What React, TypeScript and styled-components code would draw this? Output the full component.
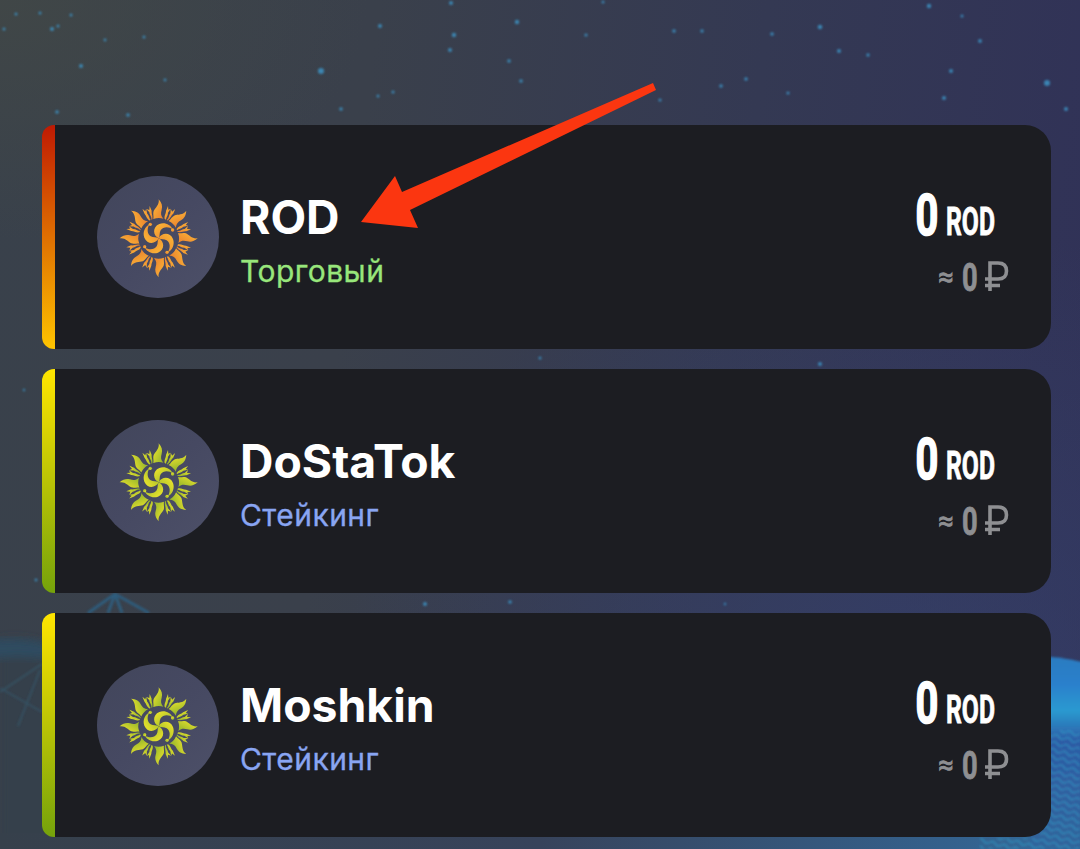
import React from "react";
import styled, { createGlobalStyle } from "styled-components";

const GlobalStyle = createGlobalStyle`
  * { box-sizing: border-box; }
  body { margin: 0; font-family: Inter, "Liberation Sans", sans-serif; background: #363d4b; }
`;

const Page = styled.main`
  position: relative;
  width: 1080px;
  height: 849px;
  overflow: hidden;
  padding: 125px 29px 0 42px;
  background:
    radial-gradient(ellipse 460px 300px at 0 0, rgba(66, 72, 70, 0.8), rgba(66, 72, 70, 0) 80%),
    radial-gradient(ellipse 560px 480px at 900px 700px, rgba(54, 66, 108, 0.7), rgba(54, 66, 108, 0)),
    linear-gradient(97deg, #39414b 0%, #3a404b 32%, #343953 65%, #303158 100%);
`;

const Backdrop = styled.svg`
  position: absolute;
  inset: 0;
`;

const WalletList = styled.div`
  position: relative;
  display: flex;
  flex-direction: column;
  gap: 20px;
`;

const WalletCard = styled.article<{ $from: string; $to: string }>`
  display: flex;
  align-items: center;
  height: 224px;
  padding: 0 42px 0 55px;
  overflow: hidden;
  border-radius: 12px 26px 26px 12px;
  background:
    linear-gradient(180deg, ${(p) => p.$from}, ${(p) => p.$to}) left / 13px 100% no-repeat,
    #1c1d22;
`;

const Avatar = styled.div`
  width: 122px;
  height: 122px;
  border-radius: 50%;
  background: linear-gradient(135deg, #42465b, #464962 50%, #4d5068);
`;

const Names = styled.div`
  flex: 1;
  margin-left: 21px;
  padding-top: 6px;
`;

const WalletName = styled.h2`
  margin: 0;
  color: #fff;
  font-size: 46.3px;
  line-height: 56px;
  font-weight: 700;
`;

const WalletKind = styled.p<{ $color: string }>`
  margin: 7px 0 1px;
  color: ${(p) => p.$color};
  font-size: 30px;
  line-height: 38px;
  letter-spacing: 0.45px;
  -webkit-text-stroke: 0.3px ${(p) => p.$color};
`;

const Figures = styled.svg`
  width: 110px;
  height: 120px;
  overflow: visible;
  font-family: Roboto, "Liberation Sans", sans-serif;
`;

const Pointer = styled.svg`
  position: absolute;
  left: 0;
  top: 0;
`;

type Palette = { id: string; light: string; dark: string };

const STEPS = [0, 45, 90, 135, 180, 225, 270, 315];

const Sun = ({ id, light, dark }: Palette) => (
  <svg width="122" height="122" viewBox="-185 -187 366 366">
    <defs>
      <linearGradient id={id} x1="0" y1="0" x2="1" y2="1">
        <stop offset="0.2" stopColor={light} />
        <stop offset="1" stopColor={dark} />
      </linearGradient>
    </defs>
    <g fill={`url(#${id})`}>
      {STEPS.map((angle) => (
        <g key={angle} transform={`rotate(${angle})`}>
          <path d="M0-117C10-106 12-96 9-86C6-76 6-68 14-59Q0-64-16-58C-14-66-18-74-15-82C-10-92 3-101 0-117Z" />
          <path d="M-22-56C-20-65-28-70-28-78L-37-88L-28-85L-27-97L-21-83C-22-73-17-69-19-57Z" />
          <path d="M18-58C16-68 22-73 22-82L28-97L29-86L36-89L28-77C28-67 22-64 22-56Z" />
        </g>
      ))}
      {[0, 90, 180, 270].map((angle) => (
        <g key={angle} transform={`rotate(${angle})`}>
          <path d="M0 0C-17-8-20-34 2-43C18-49 36-41 42-27C30-36 13-35 6-24C1-16 5-8 0 0Z" />
          <circle cx="42" cy="-25" r="5" />
        </g>
      ))}
    </g>
  </svg>
);

const Balance = () => (
  <Figures viewBox="0 0 110 120">
    <g fill="#fff" stroke="#fff" fontWeight="700">
      <text transform="translate(16.5 58) scale(0.7 1)" fontSize="57" strokeWidth="1.6">0</text>
      <text transform="translate(47 57.6) scale(0.635 1)" fontSize="39" strokeWidth="0.8">ROD</text>
    </g>
    <g fill="#8e8f92" stroke="#8e8f92">
      <text x="39.5" y="109" fontSize="27" strokeWidth="1">≈</text>
      <text transform="translate(63 113.5) scale(0.7 1)" fontSize="39" fontWeight="700" strokeWidth="0.8">0</text>
    </g>
    <path d="M91 114V86H99Q107.5 86 107.5 94Q107.5 102 99 102H86M86 108.5H101" fill="none" stroke="#8e8f92" strokeWidth="3.6" />
  </Figures>
);

const orange = { light: "#f9ae35", dark: "#e9802f" };
const lime = { light: "#e0dd2c", dark: "#8fb32c" };

const wallets = [
  { name: "ROD", kind: "Торговый", color: "#98e67b", from: "#bf1a03", to: "#ffc400", sun: orange },
  { name: "DoStaTok", kind: "Стейкинг", color: "#89a5f2", from: "#ffe500", to: "#75a20b", sun: lime },
  { name: "Moshkin", kind: "Стейкинг", color: "#89a5f2", from: "#ffe500", to: "#75a20b", sun: lime },
];

const stars = [
  [16, 14, 1.5], [40, 13, 1.5], [71, 15, 1.5], [4, 29, 1.5], [52, 29, 2], [58, 26, 1.5], [81, 66, 2], [144, 37, 1.5],
  [105, 40, 1.4], [57, 112, 1.8], [128, 115, 1.8], [83, 128, 1.5], [165, 80, 1.4], [321, 71, 3], [380, 26, 2],
  [454, 35, 2.2], [450, 50, 2], [451, 3, 2], [517, 22, 2.2], [509, 61, 1.8], [521, 81, 1.8], [393, 92, 1.6],
  [341, 109, 1.8], [378, 96, 1.5], [586, 35, 1.6], [674, 31, 1.8], [702, 31, 1.7], [772, 34, 1.8], [820, 27, 2.3],
  [839, 51, 2], [868, 55, 1.7], [721, 86, 1.8], [746, 79, 1.8], [788, 93, 1.6], [929, 6, 2.2], [980, 41, 1.9],
  [951, 71, 2], [944, 98, 2], [1047, 83, 3], [1066, 109, 2], [660, 100, 1.6], [603, 2, 1.5], [962, 16, 1.5],
  [425, 604, 2], [510, 602, 1.8], [820, 364, 2], [540, 358, 1.5], [24, 390, 1.2], [36, 580, 1.4], [725, 604, 1.2],
];

export default function App() {
  return (
    <Page>
      <GlobalStyle />
      <Backdrop width="1080" height="849">
        <defs>
          <linearGradient id="sea" x1="0" y1="0" x2="0" y2="1">
            <stop offset="0" stopColor="#2b7cc0" />
            <stop offset="0.14" stopColor="#2a80cc" />
            <stop offset="0.27" stopColor="#2a9ad0" />
            <stop offset="0.42" stopColor="#2f5aa4" />
            <stop offset="1" stopColor="#326699" />
          </linearGradient>
          <linearGradient id="ground" x1="0" y1="0" x2="1" y2="0">
            <stop offset="0" stopColor="#36404b" />
            <stop offset="0.5" stopColor="#37435b" />
            <stop offset="1" stopColor="#336a9c" />
          </linearGradient>
          <filter id="soft"><feGaussianBlur stdDeviation="4" /></filter>
          <filter id="glow"><feGaussianBlur stdDeviation="0.8" /></filter>
          <pattern id="waves" width="12" height="7" patternUnits="userSpaceOnUse" patternTransform="rotate(14)">
            <path d="M0 4Q3 1 6 4T12 4" fill="none" stroke="#2f9ac4" strokeWidth="2" opacity="0.6" />
          </pattern>
        </defs>
        <g fill="#3d93c4" opacity="0.85" filter="url(#glow)">
          {stars.map(([x, y, r]) => <circle key={`${x}-${y}`} cx={x} cy={y} r={r} />)}
        </g>
        <path d="M0 640Q25 636 50 646V849H0Z" fill="#35414c" filter="url(#soft)" />
        <path d="M-10 640Q25 636 56 646V660Q20 655-10 659Z" fill="#2e4c60" filter="url(#soft)" />
        <path d="M0 688L42 712M40 670L18 726M0 692L42 664" stroke="#365060" strokeWidth="2" fill="none" filter="url(#glow)" />
        <rect y="833" width="1080" height="16" fill="url(#ground)" />
        <path d="M1030 656Q1062 656 1090 664V859H1030Z" fill="url(#sea)" filter="url(#glow)" />
        <path d="M1040 730H1080V849H980V838H1040Z" fill="url(#waves)" filter="url(#glow)" />
        <path d="M88 613L115 594L149 613M115 594L108 613M115 594L122 613" fill="none" stroke="#2e5c7c" strokeWidth="3" filter="url(#glow)" />
      </Backdrop>
      <WalletList>
        {wallets.map((wallet, index) => (
          <WalletCard key={wallet.name} $from={wallet.from} $to={wallet.to}>
            <Avatar><Sun id={`sun-${index}`} {...wallet.sun} /></Avatar>
            <Names>
              <WalletName>{wallet.name}</WalletName>
              <WalletKind $color={wallet.color}>{wallet.kind}</WalletKind>
            </Names>
            <Balance />
          </WalletCard>
        ))}
      </WalletList>
      <Pointer width="1080" height="849">
        <path d="M653 83L656 90L410 210L418 228L361 222L395 176L402 192Z" fill="#fb3610" />
      </Pointer>
    </Page>
  );
}
